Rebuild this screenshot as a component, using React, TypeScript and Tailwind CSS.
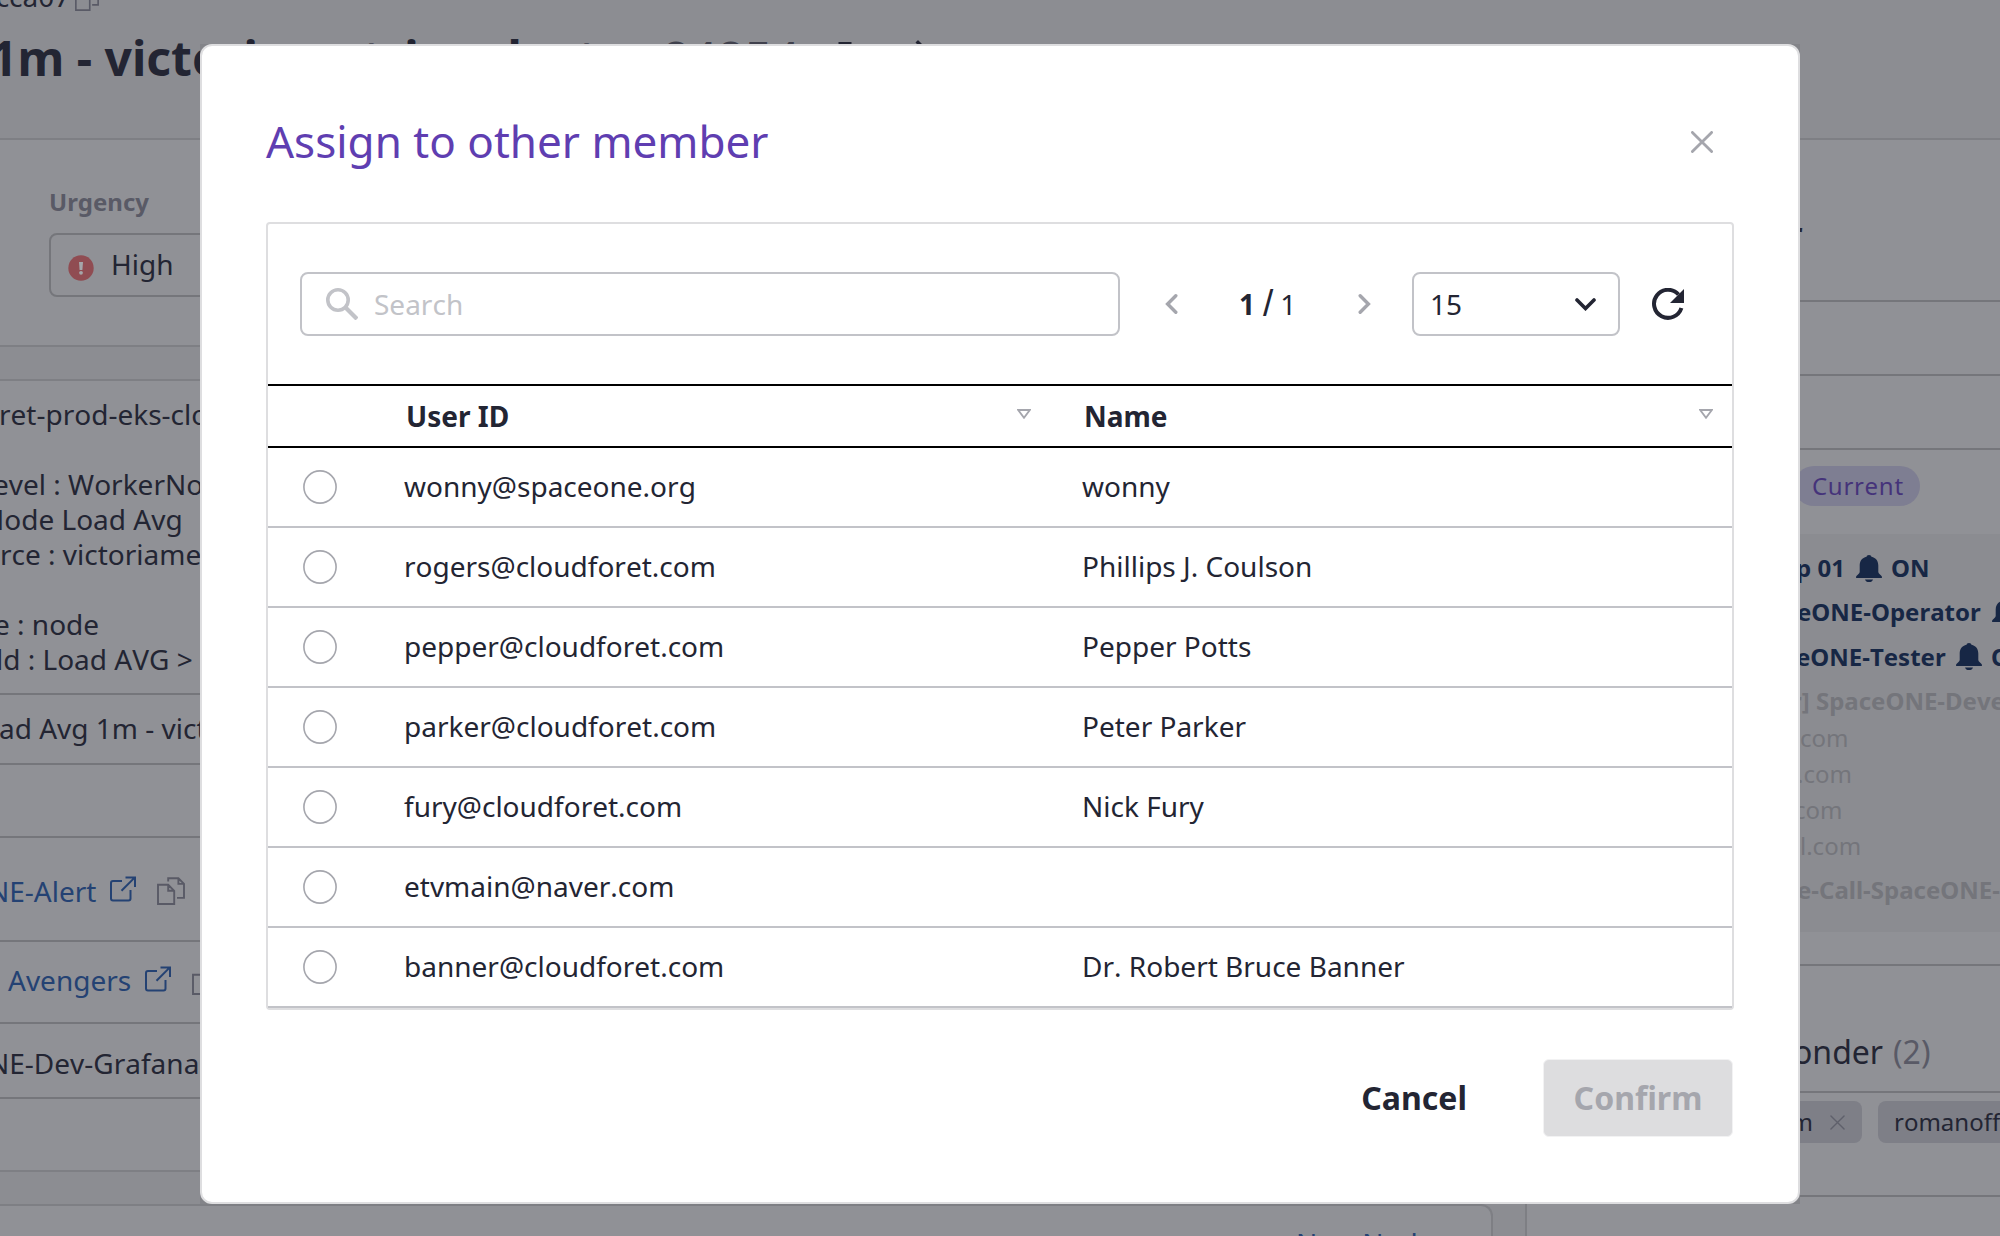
import React from 'react';

const members = [
  { id: 'wonny@spaceone.org', name: 'wonny' },
  { id: 'rogers@cloudforet.com', name: 'Phillips J. Coulson' },
  { id: 'pepper@cloudforet.com', name: 'Pepper Potts' },
  { id: 'parker@cloudforet.com', name: 'Peter Parker' },
  { id: 'fury@cloudforet.com', name: 'Nick Fury' },
  { id: 'etvmain@naver.com', name: '' },
  { id: 'banner@cloudforet.com', name: 'Dr. Robert Bruce Banner' },
];

function CopyIcon({ className = 'h-7 w-7' }: { className?: string }) {
  return (
    <svg className={`${className} shrink-0`} viewBox="0 0 28 28" fill="none" stroke="#595a66" strokeWidth="1.9">
      <path d="M1 7.800h10.200l6 6V27H1zM11.200 7.800v6h6M11.200 4.500V1.300h10.200l5.600 5.600v14h-7M21.400 1.300v5.600H27" />
    </svg>
  );
}

function LinkIcon() {
  return (
    <svg className="h-[26px] w-[26px] shrink-0" viewBox="0 0 26 26" fill="none" stroke="#244273" strokeWidth="2">
      <path d="M12 5H3a2 2 0 0 0-2 2v15.500a2 2 0 0 0 2 2h15.500a2 2 0 0 0 2-2V14M15.500 1.400H25V11M24.600 1.600L11.500 14.800" />
    </svg>
  );
}

function BellIcon() {
  return (
    <svg className="h-[27px] w-[26px] shrink-0" viewBox="0 0 26 27" fill="#172745">
      <path d="M13 0c1.500 0 2.300.8 2.400 1.700C20 2.800 22.300 6 22.300 10.500v6.200c0 1 .4 1.700 1.200 2.400l1.800 1.600c.5.500.7 1 .7 1.500 0 .6-.3.900-.8.900H.8c-.5 0-.8-.3-.8-.9 0-.5.200-1 .7-1.500l1.800-1.600c.8-.7 1.200-1.400 1.200-2.400v-6.200C3.700 6 6 2.800 10.600 1.700 10.700.8 11.500 0 13 0z" />
      <path d="M9 24.400h8c-.4 1.600-2 2.600-4 2.600s-3.600-1-4-2.600z" />
    </svg>
  );
}

function CloseIcon({ className }: { className: string }) {
  return (
    <svg className={className} viewBox="0 0 22 22" fill="none" strokeLinecap="round">
      <path d="M1.400 1.400l19.200 19.200M20.600 1.400L1.400 20.600" />
    </svg>
  );
}

function SortIcon() {
  return (
    <svg className="h-[10px] w-[14px]" viewBox="0 0 14 10" fill="none" stroke="#a5a6ad" strokeWidth="1.800">
      <path d="M1.200 1h11.600L7 8.800z" />
    </svg>
  );
}

function AlertDetails() {
  return (
    <div className="h-[793px] shrink-0 overflow-hidden border-y-2 border-[#7e7f84] bg-[#909196] text-[28px] leading-[35px] whitespace-pre">
      <div className="h-[314px] border-b-2 border-[#75767b] pt-[16px]">
        <p className="-ml-px">ret-prod-eks-clo</p>
        <p className="h-[35px]" />
        <p className="-ml-[7px]">evel : WorkerNo</p>
        <p className="-ml-[17px]">Node Load Avg</p>
        <p className="ml-0">rce : victoriame</p>
        <p className="h-[35px]" />
        <p className="-ml-[6px]">e : node</p>
        <p className="-ml-[4px]">ld : Load AVG {'>'}</p>
      </div>
      <div className="flex h-[70px] items-center border-b-2 border-[#75767b] pb-[2px]">
        <span className="-ml-px">ad Avg 1m - vict</span>
      </div>
      <div className="h-[73px] border-b-2 border-[#75767b]" />
      <div className="flex h-[104px] items-center border-b-2 border-[#75767b] pt-[5px] text-[#244273]">
        <span className="-ml-[12px] w-[109px]">NE-Alert</span>
        <span className="ml-[13px] flex pb-[5px]"><LinkIcon /></span>
        <span className="ml-[21px] pb-px"><CopyIcon /></span>
      </div>
      <div className="flex h-[82px] items-center border-b-2 border-[#75767b] pb-[3px] text-[#244273]">
        <span className="ml-2 w-[124px]">Avengers</span>
        <span className="ml-[13px] flex pb-[4px]"><LinkIcon /></span>
        <span className="ml-[21px] pt-[1px]"><CopyIcon /></span>
      </div>
      <div className="flex h-[75px] items-center border-b-2 border-[#75767b]">
        <span className="-ml-[12px] pt-[6px]">NE-Dev-Grafana</span>
      </div>
    </div>
  );
}

function ResponsePanel() {
  return (
    <div className="ml-8 flex w-[520px] shrink-0 flex-col overflow-hidden border-t-2 border-l-2 border-[#7e7f84] bg-[#909196] pl-[271px] whitespace-nowrap">
      <div className="-ml-[271px] h-[162px] shrink-0 border-b-2 border-[#75767b] pt-[74px] pl-[263px] text-[28px] leading-[38px] font-bold">
        r
      </div>
      <div className="-ml-[271px] h-[74px] shrink-0 border-b-2 border-[#75767b]" />
      <div className="-ml-[271px] h-[74px] shrink-0 border-b-2 border-[#75767b]" />
      <div className="mt-4 -ml-1 flex h-10 w-[126px] shrink-0 items-center rounded-full bg-[#7e7e92] pl-[18px] text-[24px] tracking-[0.700px] text-[#45337a]">
        Current
      </div>
      <div className="mt-7 -ml-[271px] h-[398px] shrink-0 bg-[#8b8c91] pt-[12px] pl-[271px] text-[24px] text-[#74757b]">
        <div className="flex h-[44px] items-center font-bold text-[#172745]">
          <span className="-ml-[2px] w-[45px]">p 01</span>
          <span className="ml-[15px]"><BellIcon /></span>
          <span className="ml-[9px]">ON</span>
        </div>
        <div className="flex h-[44px] items-center font-bold text-[#172745]">
          <span className="-ml-[1px] w-[182px]">eONE-Operator</span>
          <span className="ml-[13px]"><BellIcon /></span>
          <span className="ml-[9px]">ON</span>
        </div>
        <div className="flex h-[45px] items-center font-bold text-[#172745]">
          <span className="-ml-[2px] w-[148px]">eONE-Tester</span>
          <span className="ml-[12px]"><BellIcon /></span>
          <span className="ml-[9px]">ON</span>
        </div>
        <div className="-ml-[7px] h-[45px] font-bold leading-[43px]">r] SpaceONE-Deve</div>
        <div className="ml-[2px] h-9 leading-[28px]">com</div>
        <div className="-ml-[1px] h-9 leading-[28px]">.com</div>
        <div className="-ml-[4px] h-9 leading-[28px]">com</div>
        <div className="ml-[2px] h-9 leading-[28px]">l.com</div>
        <div className="-ml-[1px] h-9 leading-[44px] font-bold">e-Call-SpaceONE-</div>
      </div>
      <div className="mt-8 -ml-[271px] flex h-[129px] shrink-0 items-end border-y-2 border-[#75767b] pb-[17px] pl-[271px] text-[32px] leading-[44px]">
        <span className="-ml-[5px] w-[85px]">onder</span>
        <span className="ml-[15px] text-[#595a66]">(2)</span>
      </div>
      <div className="-ml-[271px] flex h-[104px] shrink-0 gap-4 border-b-2 border-[#75767b] pt-2 pl-[171px] text-[24px]">
        <div className="flex h-[42px] w-[164px] shrink-0 items-center justify-end rounded-lg bg-[#7e7f87] pr-[17px]">
          m
          <CloseIcon className="ml-[17px] h-[15px] w-[15px] stroke-[#5f606b] stroke-2" />
        </div>
        <div className="flex h-[42px] w-[300px] shrink-0 items-center rounded-lg bg-[#7e7f87] pl-4">romanoff</div>
      </div>
    </div>
  );
}

function Background() {
  return (
    <div className="flex h-full w-full flex-col bg-[#8c8d92]">
      <header className="h-[138px] shrink-0 overflow-hidden whitespace-nowrap">
        <div className="-mt-[22px] flex h-[36px] items-center text-[28px]">
          <span className="-ml-[14px] w-[76px]">fcca07</span>
          <span className="ml-[13px] flex pt-[6px]"><CopyIcon className="h-6 w-6" /></span>
        </div>
        <div className="flex items-start pt-[14px] text-[48px] leading-[60px] font-bold">
          <span className="-ml-[10px]">1m - victoriametrics-cluster</span>
          <span className="ml-[14px] font-medium text-[#40414d]">84854</span>
          <svg className="mt-[14px] ml-[32px] h-8 w-7" viewBox="0 0 28 32" fill="none" stroke="#232533" strokeWidth="3">
            <path d="M1 6h26M9 6V1.500h10V6M4 6l2 24.500h16L24 6" />
          </svg>
          <svg className="mt-[12px] ml-[34px] h-8 w-8" viewBox="0 0 32 32" fill="#232533">
            <path d="M0 25v7h7L27.500 11.500l-7-7zM22.500 2.500l2-2q.500-.5 1 0l6 6q.5.500 0 1l-2 2z" />
          </svg>
        </div>
      </header>
      <div className="flex min-h-0 flex-1">
        <div className="flex w-[1493px] shrink-0 flex-col overflow-hidden">
          <div className="h-[209px] shrink-0 border-y-2 border-[#7e7f84] bg-[#909196] pt-[44px] pl-[49px]">
            <p className="text-[24px] leading-[36px] font-bold text-[#595a66]">Urgency</p>
            <div className="mt-[13px] flex h-16 w-[400px] items-center rounded-lg border-2 border-[#75767b] pl-[17px] text-[28px]">
              <svg className="mt-[5px] h-[26px] w-[26px]" viewBox="0 0 26 26">
                <circle cx="13" cy="13" r="12.700" fill="#904c52" />
                <path d="M11 7h4l-.6 8h-2.800z" fill="#a5a6aa" />
                <circle cx="13" cy="17.800" r="1.900" fill="#a5a6aa" />
              </svg>
              <span className="ml-[17px] pb-[2px]">High</span>
            </div>
          </div>
          <div className="h-8 shrink-0" />
          <AlertDetails />
          <div className="mt-8 h-[200px] shrink-0 rounded-tr-xl border-t-2 border-r-2 border-[#7e7f84] bg-[#909196] pt-[18px] pl-[1296px] text-[28px] leading-[38px] text-[#244273]">
            New Node
          </div>
        </div>
        <ResponsePanel />
      </div>
    </div>
  );
}

function Toolbar() {
  return (
    <div className="flex h-[160px] items-center pl-8 text-[28px]">
      <div className="flex h-16 w-[820px] items-center rounded-lg border-2 border-[#c2c3c8] pl-6 text-[#c2c3c8]">
        <svg className="h-8 w-8" viewBox="0 0 32 32" fill="none" stroke="#c2c3c8" strokeWidth="3.600">
          <circle cx="12" cy="12" r="10.200" />
          <path d="M19.500 19.500L31 31" strokeWidth="4.200" />
        </svg>
        <span className="ml-[16px]">Search</span>
      </div>
      <svg className="ml-[45px] h-5 w-[13px]" viewBox="0 0 13 20" fill="none" stroke="#a5a6ad" strokeWidth="3.400" strokeLinecap="round">
        <path d="M10.800 1.800L2.600 10l8.200 8.200" />
      </svg>
      <div className="ml-[61px] flex w-[57px] items-center leading-[38px]">
        <b>1</b>
        <span className="ml-[8px] font-['Liberation_Sans',sans-serif] text-[37px]">/</span>
        <span className="ml-[7px]">1</span>
      </div>
      <svg className="ml-[62px] h-5 w-[13px]" viewBox="0 0 13 20" fill="none" stroke="#a5a6ad" strokeWidth="3.400" strokeLinecap="round">
        <path d="M2.200 1.800l8.200 8.200-8.200 8.200" />
      </svg>
      <div className="ml-[41px] flex h-16 w-[208px] items-center justify-between rounded-lg border-2 border-[#c2c3c8] pr-[22px] pl-4">
        <span className="pb-px">15</span>
        <svg className="h-[13px] w-[21px]" viewBox="0 0 21 13" fill="none" stroke="#232533" strokeWidth="3.600" strokeLinecap="round">
          <path d="M2 2l8.500 8.500L19 2" />
        </svg>
      </div>
      <svg className="ml-8 h-8 w-8" viewBox="0 0 32 32">
        <path d="M29.400 20A14 14 0 1 1 26.500 6.500" fill="none" stroke="#232533" strokeWidth="4" />
        <path d="M32 1v14H18z" fill="#232533" />
      </svg>
    </div>
  );
}

function MemberTable() {
  return (
    <div className="h-[788px] w-[1468px] rounded border-2 border-[#dedee0]">
      <Toolbar />
      <div className="flex h-16 items-center border-y-2 border-black text-[28px] font-bold">
        <div className="flex w-[816px] items-center justify-between pr-[53px] pl-[138px]">
          User ID <span className="mb-[5px]"><SortIcon /></span>
        </div>
        <div className="flex flex-1 items-center justify-between pr-[19px]">
          Name <span className="mb-[5px]"><SortIcon /></span>
        </div>
      </div>
      {members.map((m) => (
        <div key={m.id} className="flex h-20 items-center border-b-2 border-[#c2c3c8] pl-[35px] text-[28px]">
          <svg className="h-[34px] w-[34px]" viewBox="0 0 34 34" fill="none" stroke="#a5a6ad" strokeWidth="1.600">
            <circle cx="17" cy="17" r="16.100" />
          </svg>
          <span className="ml-[67px] w-[678px] pb-[2px]">{m.id}</span>
          <span className="pb-[2px]">{m.name}</span>
        </div>
      ))}
    </div>
  );
}

function AssignModal() {
  return (
    <div className="h-[1160px] w-[1600px] bg-[#838489]">
      <div className="flex h-full w-full flex-col rounded-xl border-2 border-[#dedee0] bg-white px-16">
        <div className="flex h-[176px] items-center justify-between pt-[16px] pr-[21px]">
          <h1 className="pb-[2px] text-[44px] leading-[60px] text-[#5f3eb1]">Assign to other member</h1>
          <CloseIcon className="h-[22px] w-[22px] stroke-[#a5a6ad] stroke-[2.800]" />
        </div>
        <MemberTable />
        <div className="mt-[49px] flex items-center justify-end pr-px text-[32px] font-bold">
          <button className="mr-[76px]">Cancel</button>
          <button className="h-[78px] w-[190px] rounded-md border border-[#f2f2f3] bg-[#dddddf] text-[#a5a6ad]">
            Confirm
          </button>
        </div>
      </div>
    </div>
  );
}

export default function App() {
  return (
    <main className="relative h-[1236px] w-[2000px] overflow-hidden font-['Noto_Sans',sans-serif] text-[#232533] [font-kerning:none]">
      <Background />
      <div className="absolute inset-0 flex justify-center pt-11">
        <AssignModal />
      </div>
    </main>
  );
}
